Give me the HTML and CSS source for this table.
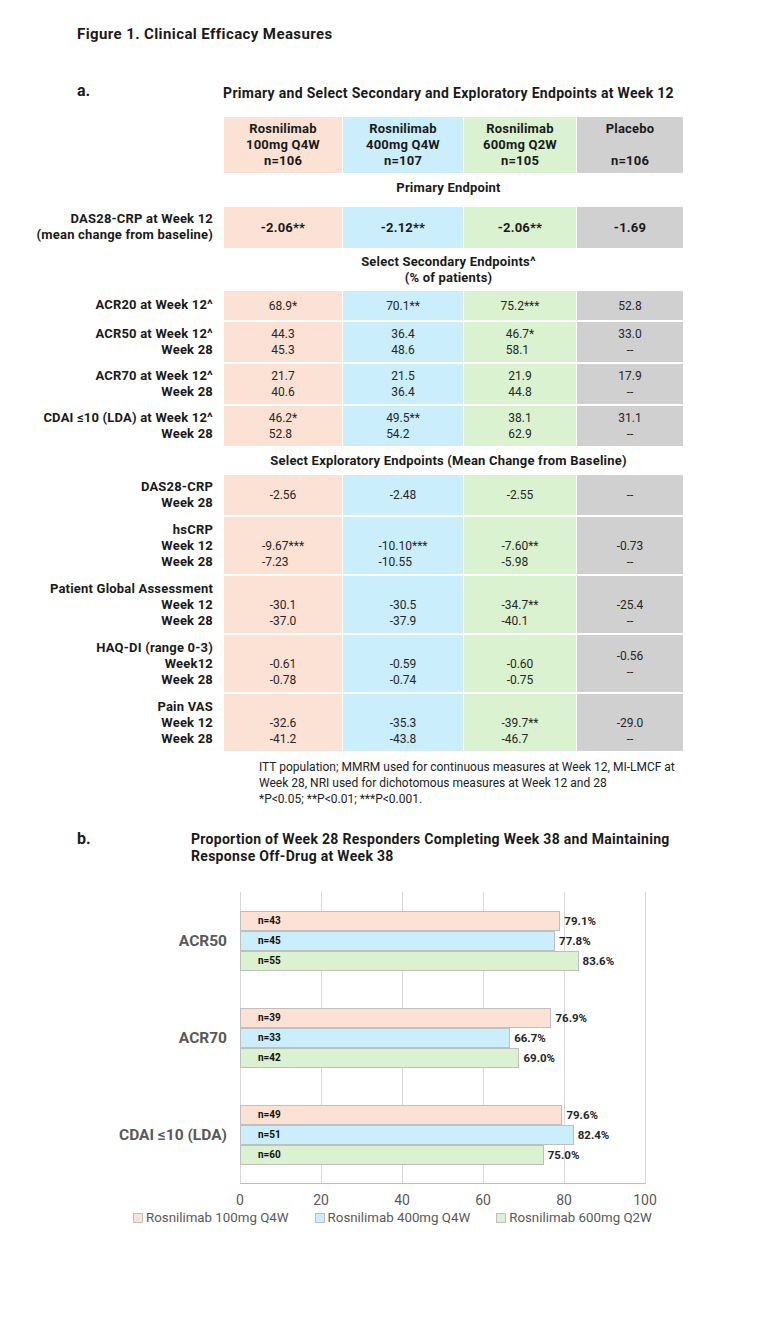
FILE: index.html
```html
<!DOCTYPE html>
<html lang="en">
<head>
<meta charset="utf-8">
<title>Figure 1. Clinical Efficacy Measures</title>
<link rel="stylesheet" href="styles.css">
</head>
<body>
<div class="page">
  <h1 class="fig-title">Figure 1. Clinical Efficacy Measures</h1>

  <div class="tbl">
    <div class="part">a.</div>
    <div class="tbl-title">Primary and Select Secondary and Exploratory Endpoints at Week 12</div>

    <div class="lab-empty"></div>
    <div class="hdr c1">Rosnilimab<br>100mg Q4W<br>n=106</div>
    <div class="hdr c2">Rosnilimab<br>400mg Q4W<br>n=107</div>
    <div class="hdr c3">Rosnilimab<br>600mg Q2W<br>n=105</div>
    <div class="hdr c4">Placebo<br>&nbsp;<br>n=106</div>

    <div class="sec sec-primary">Primary Endpoint</div>

    <div class="lab r2d">DAS28-CRP at Week 12<br>(mean change from baseline)</div>
    <div class="val c1 bold"><div class="v">-2.06**</div></div>
    <div class="val c2 bold"><div class="v">-2.12**</div></div>
    <div class="val c3 bold"><div class="v">-2.06**</div></div>
    <div class="val c4 bold"><div class="v">-1.69</div></div>

    <div class="sec sec-secondary">Select Secondary Endpoints^<br>(% of patients)</div>

    <div class="lab r1">ACR20 at Week 12^</div>
    <div class="val c1"><div class="v">68.9*</div></div>
    <div class="val c2"><div class="v">70.1**</div></div>
    <div class="val c3"><div class="v">75.2***</div></div>
    <div class="val c4"><div class="v">52.8</div></div>

    <div class="lab r2">ACR50 at Week 12^<br>Week 28</div>
    <div class="val c1"><div class="v">44.3<br>45.3</div></div>
    <div class="val c2"><div class="v">36.4<br>48.6</div></div>
    <div class="val c3"><div class="v">46.7*<br>58.1</div></div>
    <div class="val c4"><div class="v">33.0<br>--</div></div>

    <div class="lab r2">ACR70 at Week 12^<br>Week 28</div>
    <div class="val c1"><div class="v">21.7<br>40.6</div></div>
    <div class="val c2"><div class="v">21.5<br>36.4</div></div>
    <div class="val c3"><div class="v">21.9<br>44.8</div></div>
    <div class="val c4"><div class="v">17.9<br>--</div></div>

    <div class="lab r2">CDAI ≤10 (LDA) at Week 12^<br>Week 28</div>
    <div class="val c1"><div class="v">46.2*<br>52.8</div></div>
    <div class="val c2"><div class="v">49.5**<br>54.2</div></div>
    <div class="val c3"><div class="v">38.1<br>62.9</div></div>
    <div class="val c4"><div class="v">31.1<br>--</div></div>

    <div class="sec sec-explor">Select Exploratory Endpoints (Mean Change from Baseline)</div>

    <div class="lab r2">DAS28-CRP<br>Week 28</div>
    <div class="val c1"><div class="v">-2.56</div></div>
    <div class="val c2"><div class="v">-2.48</div></div>
    <div class="val c3"><div class="v">-2.55</div></div>
    <div class="val c4"><div class="v">--</div></div>

    <div class="lab r3">hsCRP<br>Week 12<br>Week 28</div>
    <div class="val c1"><div class="v">&nbsp;<br>-9.67***<br>-7.23</div></div>
    <div class="val c2"><div class="v">&nbsp;<br>-10.10***<br>-10.55</div></div>
    <div class="val c3"><div class="v">&nbsp;<br>-7.60**<br>-5.98</div></div>
    <div class="val c4"><div class="v">&nbsp;<br>-0.73<br>--</div></div>

    <div class="lab r3">Patient Global Assessment<br>Week 12<br>Week 28</div>
    <div class="val c1"><div class="v">&nbsp;<br>-30.1<br>-37.0</div></div>
    <div class="val c2"><div class="v">&nbsp;<br>-30.5<br>-37.9</div></div>
    <div class="val c3"><div class="v">&nbsp;<br>-34.7**<br>-40.1</div></div>
    <div class="val c4"><div class="v">&nbsp;<br>-25.4<br>--</div></div>

    <div class="lab r3">HAQ-DI (range 0-3)<br>Week12<br>Week 28</div>
    <div class="val c1"><div class="v">&nbsp;<br>-0.61<br>-0.78</div></div>
    <div class="val c2"><div class="v">&nbsp;<br>-0.59<br>-0.74</div></div>
    <div class="val c3"><div class="v">&nbsp;<br>-0.60<br>-0.75</div></div>
    <div class="val c4"><div class="v">-0.56<br>--</div></div>

    <div class="lab r3">Pain VAS<br>Week 12<br>Week 28</div>
    <div class="val c1"><div class="v">&nbsp;<br>-32.6<br>-41.2</div></div>
    <div class="val c2"><div class="v">&nbsp;<br>-35.3<br>-43.8</div></div>
    <div class="val c3"><div class="v">&nbsp;<br>-39.7**<br>-46.7</div></div>
    <div class="val c4"><div class="v">&nbsp;<br>-29.0<br>--</div></div>

    <p class="foot">ITT population; MMRM used for continuous measures at Week 12, MI-LMCF at<br>Week 28, NRI used for dichotomous measures at Week 12 and 28<br>*P&lt;0.05; **P&lt;0.01; ***P&lt;0.001.</p>
  </div>

  <div class="b-row">
    <div class="part part-b">b.</div>
    <div class="chart-title">Proportion of Week 28 Responders Completing Week 38 and Maintaining<br>Response Off-Drug at Week 38</div>
  </div>

  <div class="chart">
    <div class="cats">
      <div class="cat">ACR50</div>
      <div class="cat">ACR70</div>
      <div class="cat">CDAI ≤10 (LDA)</div>
    </div>
    <div class="plot">
      <div class="grp">
        <div class="brow"><div class="bar c1" style="width:79.1%">n=43</div><span class="pct">79.1%</span></div>
        <div class="brow"><div class="bar c2" style="width:77.8%">n=45</div><span class="pct">77.8%</span></div>
        <div class="brow"><div class="bar c3" style="width:83.6%">n=55</div><span class="pct">83.6%</span></div>
      </div>
      <div class="grp">
        <div class="brow"><div class="bar c1" style="width:76.9%">n=39</div><span class="pct">76.9%</span></div>
        <div class="brow"><div class="bar c2" style="width:66.7%">n=33</div><span class="pct">66.7%</span></div>
        <div class="brow"><div class="bar c3" style="width:69.0%">n=42</div><span class="pct">69.0%</span></div>
      </div>
      <div class="grp">
        <div class="brow"><div class="bar c1" style="width:79.6%">n=49</div><span class="pct">79.6%</span></div>
        <div class="brow"><div class="bar c2" style="width:82.4%">n=51</div><span class="pct">82.4%</span></div>
        <div class="brow"><div class="bar c3" style="width:75.0%">n=60</div><span class="pct">75.0%</span></div>
      </div>
    </div>
    <div class="axis">
      <span>0</span><span>20</span><span>40</span><span>60</span><span>80</span><span>100</span>
    </div>
  </div>

  <div class="legend">
    <div class="leg"><span class="sw c1"></span>Rosnilimab 100mg Q4W</div>
    <div class="leg"><span class="sw c2"></span>Rosnilimab 400mg Q4W</div>
    <div class="leg"><span class="sw c3"></span>Rosnilimab 600mg Q2W</div>
  </div>
</div>
</body>
</html>
```

FILE: styles.css
```css
* { box-sizing: border-box; }

body {
  margin: 0;
  background: #ffffff;
  color: #1a1a1a;
  font-family: Roboto, "Liberation Sans", Arial, sans-serif;
}

.page {
  width: 768px;
  padding-bottom: 40px;
}

.fig-title {
  margin: 25px 0 0 77px;
  font-size: 15px;
  font-weight: 700;
  letter-spacing: 0.4px;
  line-height: 18px;
}

/* ---------- Table (part a) ---------- */
.tbl {
  display: grid;
  grid-template-columns: 223px 118px 120px 112px 106px;
  column-gap: 1px;
  row-gap: 2px;
  margin-top: 41px;
  font-size: 12px;
  line-height: 16px;
}

.part {
  padding-left: 77px;
  font-size: 16px;
  font-weight: 700;
  line-height: 18px;
  margin-top: -2px;
}

.tbl-title {
  grid-column: 2 / -1;
  margin-left: -10px;
  text-align: center;
  font-size: 14px;
  font-weight: 700;
  letter-spacing: 0.3px;
  line-height: 18px;
  padding-bottom: 13px;
}

.c1 { background: #fbe2d5; }
.c2 { background: #caeefb; }
.c3 { background: #daf2d0; }
.c4 { background: #d0d0d0; }

.hdr {
  padding: 4px 0;
  text-align: center;
  font-size: 13px;
  font-weight: 700;
  letter-spacing: 0.2px;
}

.sec {
  grid-column: 2 / -1;
  margin-left: -10px;
  text-align: center;
  font-size: 13px;
  font-weight: 700;
  letter-spacing: 0.2px;
}
.sec-primary { padding: 5px 0 9px; }
.sec-secondary { padding: 4px 0 3px; }
.sec-explor { padding: 5px 0 4px; }

.lab {
  grid-column: 1;
  text-align: right;
  font-size: 13px;
  font-weight: 700;
  letter-spacing: 0.2px;
  padding-right: 10px;
  white-space: nowrap;
}
.r1 { padding-top: 6px; padding-bottom: 7px; }
.r2 { padding-top: 4px; padding-bottom: 4px; }
.r2d { padding-top: 4px; padding-bottom: 5px; }
.r3 { padding-top: 5px; padding-bottom: 4px; }

.val {
  display: flex;
  align-items: center;
  justify-content: center;
  color: #262626;
}
.val .v {
  text-align: left;
  white-space: nowrap;
}
.val.c4 .v { text-align: center; }
.val.bold {
  font-size: 13px;
  font-weight: 700;
  letter-spacing: 0.2px;
  color: #1a1a1a;
}

.foot {
  grid-column: 2 / -1;
  margin: 6px 0 0;
  padding-left: 35px;
  font-size: 12px;
  line-height: 16px;
  color: #222222;
  white-space: nowrap;
}

/* ---------- Chart (part b) ---------- */
.b-row {
  display: flex;
  align-items: flex-start;
  margin-top: 24px;
  padding-left: 77px;
}
.part-b {
  width: 114px;
  padding-left: 0;
  margin-top: -1px;
}
.chart-title {
  font-size: 14px;
  font-weight: 700;
  letter-spacing: 0.3px;
  line-height: 17px;
}

.chart {
  display: grid;
  grid-template-columns: 240px 406px;
  margin-top: 27px;
}

.cats {
  display: flex;
  flex-direction: column;
}
.cat {
  height: 97px;
  display: flex;
  align-items: center;
  justify-content: flex-end;
  padding-right: 13px;
  font-size: 15.5px;
  font-weight: 700;
  color: #595959;
}

.plot {
  width: 406px;
  border-right: 1px solid #d9d9d9;
  border-bottom: 1px solid #bfbfbf;
  background-image: linear-gradient(to right, #d9d9d9 0, #d9d9d9 1px, transparent 1px);
  background-size: 81px 100%;
  background-repeat: repeat-x;
}
.grp {
  height: 97px;
  display: flex;
  flex-direction: column;
  justify-content: center;
}
.brow {
  display: flex;
  align-items: center;
  height: 20px;
}
.bar {
  flex: none;
  height: 20px;
  border: 1px solid #bfbfbf;
  display: flex;
  align-items: center;
  padding-left: 17px;
  font-size: 10px;
  font-weight: 700;
  color: #111111;
}
.pct {
  margin-left: 4px;
  font-size: 11.5px;
  font-weight: 700;
  color: #262626;
  white-space: nowrap;
}

.axis {
  grid-column: 2;
  width: 486px;
  margin-left: -40.5px;
  margin-top: 8px;
  display: grid;
  grid-template-columns: repeat(6, 81px);
  text-align: center;
  font-size: 14px;
  line-height: 16px;
  color: #595959;
}

.legend {
  display: flex;
  gap: 26px;
  margin-top: 2px;
  padding-left: 133px;
  font-size: 13.3px;
  line-height: 16px;
  color: #595959;
}
.leg {
  display: flex;
  align-items: center;
}
.sw {
  width: 10px;
  height: 10px;
  border: 1px solid #bfbfbf;
  margin-right: 3px;
}
```
